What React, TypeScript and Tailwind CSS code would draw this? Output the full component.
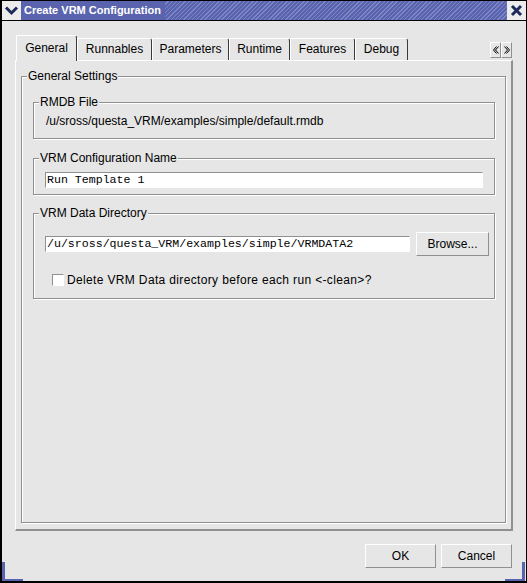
import type { ReactNode } from 'react'

// etched group box, like the old Qt "QGroupBox"
function Group({ title, className = '', children }: { title: string; className?: string; children?: ReactNode }) {
  return (
    <div className={`relative shrink-0 border border-[#909090] shadow-[inset_1px_1px_0_#ffffff,1px_1px_0_#ffffff] ${className}`}>
      <span className="absolute left-[5px] top-[-8px] bg-[#e6e6e6] px-[1px] leading-[14px]">{title}</span>
      {children}
    </div>
  )
}

function Button({ label, className = '' }: { label: string; className?: string }) {
  return (
    <div
      className={`flex h-[24px] shrink-0 items-center justify-center border border-t-white border-l-white border-r-[#909090] border-b-[#909090] bg-[#e6e6e6] ${className}`}
    >
      {label}
    </div>
  )
}

function Input({ value, className = '' }: { value: string; className?: string }) {
  return (
    <div
      className={`flex h-[16px] shrink-0 items-center border border-t-[#909090] border-l-[#909090] border-r-white border-b-white bg-white pl-[1px] font-['Liberation_Mono',monospace] text-[11.6px] leading-[14px] ${className}`}
    >
      {value}
    </div>
  )
}

const tabs = [
  { label: 'General', w: 'w-[61px]' },
  { label: 'Runnables', w: 'w-[75px]' },
  { label: 'Parameters', w: 'w-[77px]' },
  { label: 'Runtime', w: 'w-[61px]' },
  { label: 'Features', w: 'w-[65px]' },
  { label: 'Debug', w: 'w-[53px]' },
]

function Arrow({ dir }: { dir: 'left' | 'right' }) {
  return (
    <div className="flex h-[16px] w-[11px] items-center justify-center border border-t-white border-l-white border-r-[#909090] border-b-[#909090]">
      <svg width="6" height="8" viewBox="0 0 6 8" className={dir === 'right' ? 'rotate-180' : ''}>
        <path d="M3.5 0.5 L0.5 4 L3.5 7.5 M5.5 0.5 L2.5 4 L5.5 7.5" fill="none" stroke="#000" strokeWidth="1" />
      </svg>
    </div>
  )
}

export default function App() {
  return (
    <div className="relative flex h-[583px] w-[527px] flex-col overflow-hidden border-t border-r border-b-2 border-l-2 border-black bg-[#e6e6e6] font-['Liberation_Sans',Arial,sans-serif] text-[12px] text-black">
      {/* title bar */}
      <div className="flex h-[20px] shrink-0 border-b border-black bg-[#5a64ae]">
        <div className="flex w-[19px] items-center justify-center bg-[#ececec]">
          <svg width="15" height="15" viewBox="0 0 15 15">
            <path d="M2 4.5 L7.5 10 L13 4.5" fill="none" stroke="#1e2a5c" strokeWidth="3" />
          </svg>
        </div>
        <div className="pl-[3px] pr-[4px] text-[11px] font-bold leading-[19px] text-white">Create VRM Configuration</div>
        <div className="flex-1 bg-[image:repeating-linear-gradient(135deg,#5a64ae_0px,#5a64ae_2px,#7d87c6_2px,#7d87c6_3px)]" />
        <div className="flex w-[19px] items-center justify-center bg-[#ececec]">
          <svg width="13" height="13" viewBox="0 0 13 13">
            <path d="M2 2 L11 11 M11 2 L2 11" fill="none" stroke="#1e2a5c" strokeWidth="3" />
          </svg>
        </div>
      </div>

      {/* body */}
      <div className="flex flex-1 flex-col">
        <div className="flex h-[39px] shrink-0 items-end pt-[14px] pr-[14px] pl-[14px]">
          {tabs.map((t, i) =>
            i === 0 ? (
              <div
                key={t.label}
                className={`relative z-10 mb-[-1px] flex h-[26px] items-center justify-center rounded-tr-[3px] border-t border-l border-r border-t-white border-l-white border-r-[#3a3a3a] bg-[#e6e6e6] pb-[2px] ${t.w}`}
              >
                {t.label}
              </div>
            ) : (
              <div
                key={t.label}
                className={`flex h-[22px] items-center justify-center rounded-tr-[3px] border-t border-l border-r border-t-white border-l-white border-r-[#3a3a3a] pb-[2px] ${t.w}`}
              >
                {t.label}
              </div>
            )
          )}
          <div className="mb-[2px] ml-auto flex">
            <Arrow dir="left" />
            <Arrow dir="right" />
          </div>
        </div>

        <div className="ml-[13px] flex h-[471px] w-[498px] shrink-0 flex-col border-t border-r-2 border-b-2 border-l border-t-white border-l-white border-r-[#909090] border-b-[#909090] px-[5px] pt-[15px] pb-[6px]">
          <Group title="General Settings" className="flex flex-1 flex-col pt-[25px] pr-[10px] pl-[11px]">
            <Group title="RMDB File" className="h-[37px] pt-[11px] pl-[12px] leading-[14px]">
              /u/sross/questa_VRM/examples/simple/default.rmdb
            </Group>

            <Group title="VRM Configuration Name" className="mt-[19px] h-[37px] pt-[13px] pl-[11px]">
              <Input value="Run Template 1" className="w-[438px]" />
            </Group>

            <Group title="VRM Data Directory" className="mt-[18px] h-[86px] pt-[18px] pl-[11px]">
              <div className="flex items-center">
                <Input value="/u/sross/questa_VRM/examples/simple/VRMDATA2" className="w-[365px]" />
                <Button label="Browse..." className="ml-[6px] w-[73px]" />
              </div>
              <div className="mt-[17px] flex h-[14px] items-center pl-[7px]">
                <div className="h-[12px] w-[12px] border border-t-[#909090] border-l-[#909090] border-r-white border-b-white bg-white" />
                <span className="ml-[3px] tracking-[0.35px]">Delete VRM Data directory before each run &lt;-clean&gt;?</span>
              </div>
            </Group>
          </Group>
        </div>

        <div className="mt-[13px] flex justify-end gap-[5px] pr-[14px]">
          <Button label="OK" className="w-[71px]" />
          <Button label="Cancel" className="w-[71px]" />
        </div>
      </div>

      {/* window manager resize corners */}
      <div className="absolute bottom-0 left-0 h-[19px] w-[3px] bg-[#5a64ae]" />
      <div className="absolute bottom-0 left-[3px] h-[2px] w-[18px] bg-[#5a64ae]" />
      <div className="absolute right-[1px] bottom-0 h-[19px] w-[3px] bg-[#5a64ae]" />
      <div className="absolute right-[1px] bottom-0 h-[2px] w-[20px] bg-[#5a64ae]" />
    </div>
  )
}
